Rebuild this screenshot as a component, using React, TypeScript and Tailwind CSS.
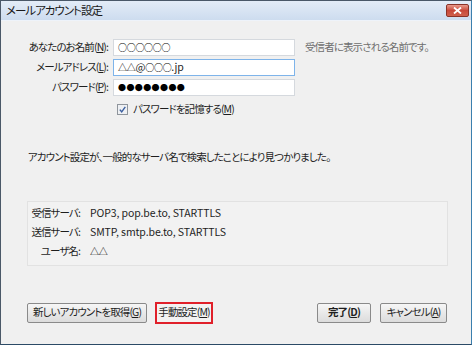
const font = "[font-family:'Noto_Sans_CJK_JP','Noto_Sans',sans-serif] [font-feature-settings:'palt'] text-[10.5px] tracking-[-0.9px] leading-none text-[#1e1e1e]";
const latin = "tracking-[-0.1px]";
const sym = "text-[9px] tracking-[-0.3px] text-black font-medium";

function Field({ label, k, value, focused, children }: { label: string; k: string; value: React.ReactNode; focused?: boolean; children?: React.ReactNode }) {
    return (
        <div className="flex items-center h-[17px]">
            <div className="w-[81px] flex justify-end whitespace-nowrap">
                <span>
                    {label}(<u>{k}</u>):
                </span>
            </div>
            <div
                className={
                    "ml-[5px] w-[182px] h-[17px] bg-white flex items-center pl-[4px] whitespace-nowrap text-[#222] border " +
                    (focused ? "border-[#7eb4ea]" : "border-[#d5d9de]")
                }
            >
                {value}
            </div>
            {children}
        </div>
    );
}

function Btn({ children, className = "" }: { children: React.ReactNode; className?: string }) {
    return (
        <div
            className={
                "h-[20px] flex items-center justify-center rounded-[2px] border border-[#8a8a8a] bg-gradient-to-b from-[#f6f6f6] to-[#dcdcdc] whitespace-nowrap " +
                className
            }
        >
            {children}
        </div>
    );
}

export default function App() {
    return (
        <div className={"w-[474px] h-[346px] bg-white " + font}>
            <div className="w-[472px] h-[345px] flex flex-col border border-[#4a5868] border-r-[#3b7fae] border-b-[#2b4a66] bg-[#f0f0f0]">
                {/* title bar */}
                <div className="h-[20px] flex items-center justify-between pl-[5px] pr-[2px] bg-gradient-to-b from-[#e3ecf7] to-[#cddcef] border-b border-[#eef3fa]">
                    <span className="text-[11.5px] tracking-[-1px] text-[#1a1a1a]">メールアカウント設定</span>
                    <div className="w-[23px] h-[13px] rounded-[2px] border border-[#8b3328] bg-gradient-to-b from-[#e89a8c] via-[#c8483a] to-[#d0604c] flex items-center justify-center">
                        <svg width="9" height="7" viewBox="0 0 9 7">
                            <path d="M1 0.5 L8 6.5 M8 0.5 L1 6.5" stroke="#fff" strokeWidth="1.8" />
                        </svg>
                    </div>
                </div>

                <div className="flex-1 flex flex-col pl-[26px] pr-[24px]">
                    {/* form */}
                    <div className="mt-[18px] flex flex-col gap-[3px]">
                        <Field label="あなたのお名前" k="N" value={<span className={sym}>○○○○○○</span>}>
                            <span className="ml-[10px] text-[#6e6e6e] whitespace-nowrap">受信者に表示される名前です。</span>
                        </Field>
                        <Field
                            label="メールアドレス"
                            k="L"
                            value={
                                <span className={latin}>
                                    <span className={sym}>△△</span>@<span className={sym}>○○○</span>.jp
                                </span>
                            }
                            focused
                        />
                        <Field label="パスワード" k="P" value={<span className="text-[8px] tracking-[0.4px] text-black">●●●●●●●●</span>} />
                    </div>
                    <div className="mt-[7px] ml-[90px] flex items-center gap-[5px] h-[12px]">
                        <svg width="11" height="11" viewBox="0 0 11 11">
                            <rect x="0.5" y="0.5" width="10" height="10" fill="#eef0f3" stroke="#8f959c" />
                            <path d="M2.8 5.6 L4.7 7.8 L8.3 2.8" fill="none" stroke="#3b5fa0" strokeWidth="1.4" />
                        </svg>
                        <span className="whitespace-nowrap">
                            パスワードを記憶する(<u>M</u>)
                        </span>
                    </div>

                    <div className="mt-[37px] ml-[1px] whitespace-nowrap">
                        アカウント設定が、一般的なサーバ名で検索したことにより見つかりました。
                    </div>

                    {/* server info */}
                    <div className="mt-[38px] w-[421px] h-[65px] border border-[#e2e2e2] bg-[#f2f2f2] pt-[2px] flex flex-col whitespace-nowrap">
                        <div className="h-[19px] flex items-center">
                            <span className="w-[52px] text-right">受信サーバ:</span>
                            <span className={"ml-[10px] " + latin}>POP3, pop.be.to, STARTTLS</span>
                        </div>
                        <div className="h-[19px] flex items-center">
                            <span className="w-[52px] text-right">送信サーバ:</span>
                            <span className={"ml-[10px] " + latin}>SMTP, smtp.be.to, STARTTLS</span>
                        </div>
                        <div className="h-[20px] flex items-center">
                            <span className="w-[52px] text-right">ユーザ名:</span>
                            <span className={"ml-[10px] " + sym}>△△</span>
                        </div>
                    </div>

                    {/* buttons */}
                    <div className="mt-[36px] flex items-center">
                        <Btn className="w-[120px]">
                            新しいアカウントを取得(<u>G</u>)
                        </Btn>
                        <div className="ml-[8px] w-[58px] h-[22px] border-2 border-[#e0202a] flex items-center justify-center bg-[#f2f2f2] whitespace-nowrap">
                            手動設定(<u>M</u>)
                        </div>
                        <div className="flex-1" />
                        <Btn className="w-[54px] font-bold">
                            完了(<u>D</u>)
                        </Btn>
                        <Btn className="ml-[9px] w-[67px]">
                            キャンセル(<u>A</u>)
                        </Btn>
                    </div>
                </div>
            </div>
        </div>
    );
}
